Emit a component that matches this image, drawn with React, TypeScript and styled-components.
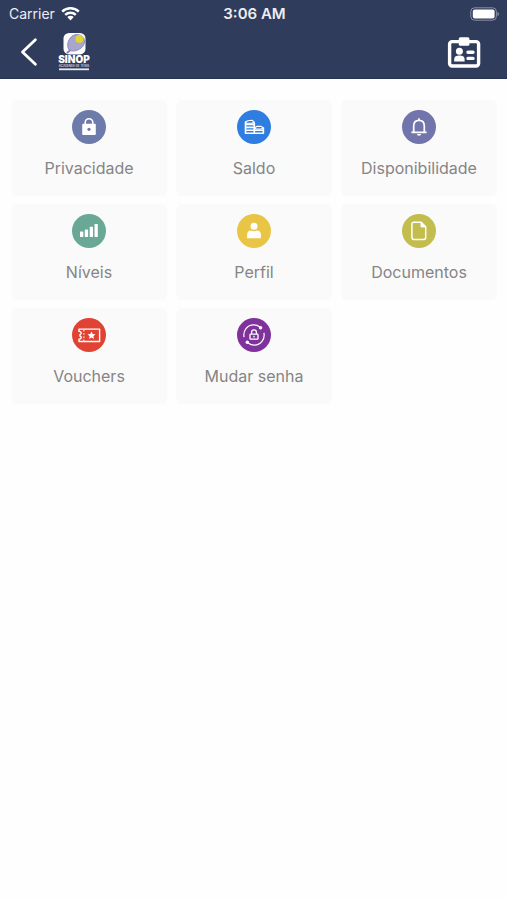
import React from 'react';
import styled, { createGlobalStyle } from 'styled-components';

const GlobalStyle = createGlobalStyle`
  *, *::before, *::after { box-sizing: border-box; }
  body {
    margin: 0;
    background: #fefefe;
    font-family: Inter, "Open Sans", sans-serif;
  }
`;

const Header = styled.header`
  background: #303c5b;
  border-bottom: 1px solid #28324d;
  color: #fff;
`;

const StatusBar = styled.div`
  display: grid;
  grid-template-columns: 1fr auto 1fr;
  align-items: center;
  height: 28px;
  padding: 0 7px 0 9px;
  font-size: 14px;
  line-height: 20px;
  color: #eceef3;
`;

const Carrier = styled.span`
  display: flex;
  align-items: center;
  gap: 6px;
`;

const Clock = styled.time`
  font-size: 15px;
  font-weight: 600;
`;

const BatteryIcon = styled.svg`
  justify-self: end;
`;

const NavBar = styled.nav`
  display: flex;
  align-items: center;
  height: 50px;
  padding: 0 25px 2px 18px;
`;

const IconButton = styled.button`
  display: flex;
  padding: 0;
  border: 0;
  background: none;
  color: inherit;
  cursor: pointer;
`;

const BadgeButton = styled(IconButton)`
  margin-left: auto;
`;

const Logo = styled.svg`
  margin-left: 18px;
`;

const Menu = styled.main`
  display: grid;
  grid-template-columns: repeat(3, 1fr);
  gap: 8px 9px;
  padding: 21px 10px 24px 11px;
`;

const Card = styled.button`
  display: flex;
  flex-direction: column;
  align-items: center;
  gap: 12px;
  height: 96px;
  padding: 10px 0 0;
  border: 0;
  border-radius: 6px;
  background: #fafafa;
  color: #858585;
  font-family: inherit;
  font-size: 16px;
  font-weight: 400;
  line-height: 24px;
  cursor: pointer;
`;

const Disc = styled.span<{ $color: string }>`
  display: flex;
  width: 34px;
  height: 34px;
  border-radius: 50%;
  background: ${({ $color }) => $color};
`;

const Glyph = ({ children }: { children: React.ReactNode }) => (
  <svg width="34" height="34" viewBox="0 0 34 34" fill="none" stroke="#fff" strokeWidth="1.4" strokeLinejoin="round" aria-hidden="true">
    {children}
  </svg>
);

const items = [
  {
    label: 'Privacidade',
    color: '#6c7ba9',
    icon: (
      <>
        <path d="M13.2 15.5V12.5a3.8 3.8 0 0 1 7.6 0v3" strokeWidth="1.6" />
        <rect x="10.2" y="13.8" width="13.6" height="11.2" rx="1" fill="#fff" stroke="none" />
        <circle cx="17" cy="19.3" r="1.6" fill="#6c7ba9" stroke="none" />
      </>
    ),
  },
  {
    label: 'Saldo',
    color: '#2f7de1',
    icon: (
      <>
        <path d="M8.5 11.4V23.2H26.4V17.6M8.5 14.4h9M8.5 17.4h9M8.5 20.3h18M17.3 12.4v10.8" strokeWidth="1.6" />
        <path d="M8.7 12l2-1.3 4.3-.4 2.4 1.8-2.8 1.2H8.7z" strokeWidth="1.1" />
        <path d="M17.5 17.8l2.4-1.4h4.2l2.2 1.4-2 1.2h-5.4z" strokeWidth="1.1" />
      </>
    ),
  },
  {
    label: 'Disponibilidade',
    color: '#7274ac',
    icon: (
      <>
        <path d="M9.4 22.4h15.2M11.7 22v-6.1c0-3.4 2.1-5.6 5.3-5.6s5.3 2.2 5.3 5.6V22M17 10.3V8.2" strokeWidth="1.7" />
        <path d="M15 24h4a2 1.8 0 0 1-4 0z" fill="#fff" stroke="none" />
      </>
    ),
  },
  {
    label: 'Níveis',
    color: '#69a894',
    icon: (
      <g fill="#fff" stroke="none">
        <rect x="8" y="17.6" width="3.3" height="5.4" rx=".6" />
        <rect x="12.8" y="15.4" width="3.3" height="7.6" rx=".6" />
        <rect x="17.7" y="12.7" width="3.3" height="10.3" rx=".6" />
        <rect x="22.5" y="10" width="3.3" height="13" rx=".6" />
      </g>
    ),
  },
  {
    label: 'Perfil',
    color: '#e9c546',
    icon: (
      <g fill="#fff" stroke="none">
        <circle cx="17" cy="12.3" r="3.5" />
        <path d="M10.1 24.3v-3.6c0-2.6 1.7-4.2 4.1-4.2 1.8.9 3.8.9 5.6 0 2.4 0 4.1 1.6 4.1 4.2v3.6z" />
      </g>
    ),
  },
  {
    label: 'Documentos',
    color: '#c2bd4c',
    icon: (
      <>
        <path d="M11.8 8.2h7.4l4.5 4.6v10.8a1.9 1.9 0 0 1-1.9 1.9h-10a1.9 1.9 0 0 1-1.9-1.9V10.1a1.9 1.9 0 0 1 1.9-1.9z" strokeWidth="1.5" />
        <path d="M19 8.2v4.7h4.7z" fill="#fff" strokeWidth="1" />
      </>
    ),
  },
  {
    label: 'Vouchers',
    color: '#e04333',
    icon: (
      <>
        <path d="M7 11.1h20.6v12.4H7v-2.3c2.7-.3 3-2.3 1-3.2v-1.4c2-.9 1.7-2.9-1-3.2z" />
        <path d="M11.9 11.5v1.9M11.9 15.1v1.7M11.9 18.4v1.7M11.9 21.6v1.7" strokeWidth="1" />
        <path d="M19.5 13.4l1.2 2.5 2.7.4-2 1.9.5 2.7-2.4-1.3-2.4 1.3.5-2.7-2-1.9 2.7-.4z" fill="#fff" stroke="none" />
      </>
    ),
  },
  {
    label: 'Mudar senha',
    color: '#7f319c',
    icon: (
      <>
        <path d="M7.1 19.2C5.7 12.6 10.3 6.9 16.7 6.9c2.3 0 4.4.7 6.1 2.1M26.9 14.8c1.4 6.6-3.2 12.3-9.6 12.3-2.3 0-4.4-.7-6.1-2.1" strokeWidth="1.2" />
        <circle cx="23.6" cy="9.8" r="1.7" fill="#fff" stroke="none" />
        <circle cx="10.3" cy="24.3" r="1.7" fill="#fff" stroke="none" />
        <rect x="13" y="16.2" width="8" height="5" rx=".6" strokeWidth="1.3" />
        <path d="M14.6 16v-1.8a2.4 2.4 0 0 1 4.8 0V16M17 17.8v1.6" strokeWidth="1.3" />
      </>
    ),
  },
];

export default function App() {
  return (
    <>
      <GlobalStyle />
      <Header>
        <StatusBar>
          <Carrier>
            Carrier
            <svg width="19" height="14" viewBox="0 0 19 14" fill="none" stroke="#fff" strokeWidth="2.5" aria-hidden="true">
              <path d="M1.2 4.6a12 12 0 0 1 16.6 0M4.2 7.9a7.7 7.7 0 0 1 10.6 0" />
              <path d="M6.3 10.1a4.6 4.6 0 0 1 6.4 0L9.5 13.4z" fill="#fff" stroke="none" />
            </svg>
          </Carrier>
          <Clock>3:06 AM</Clock>
          <BatteryIcon width="30" height="14" viewBox="0 0 30 14" role="img" aria-label="Bateria">
            <rect x=".8" y=".8" width="25.6" height="12.4" rx="3.8" fill="none" stroke="#8a91a5" />
            <rect x="2.8" y="2.4" width="21.8" height="9.2" rx="2" fill="#fff" />
            <path d="M27.5 4.8c2 .8 2 3.6 0 4.4z" fill="#8a91a5" />
          </BatteryIcon>
        </StatusBar>
        <NavBar>
          <IconButton type="button" aria-label="Voltar">
            <svg width="22" height="30" viewBox="0 0 22 30" fill="none" stroke="#fff" strokeWidth="2.8" strokeLinecap="round" strokeLinejoin="round">
              <path d="M17.4 2.8L4.5 15l12.9 12.2" />
            </svg>
          </IconButton>
          <Logo width="32" height="40" viewBox="0 0 32 40" role="img" aria-label="Sinop">
            <rect x="5.5" y="1" width="22" height="21.4" rx="5.5" fill="#fbfbff" />
            <path d="M11.5 18.2C8.4 15 9.5 8.2 13.6 4.6c3.4-2.9 8.8-2.6 11.6.8 2.1 2.6 1.6 6.8-.8 9.4-3.3 3.5-8.7 5.3-12.9 3.4z" fill="#a9a5cd" stroke="#8d8bb8" />
            <path d="M12.6 18l-3.8 3" stroke="#8986b5" strokeWidth="2" />
            <circle cx="21.4" cy="6.9" r="3.9" fill="#dfd635" />
            <text x="16" y="31.4" textAnchor="middle" fontFamily="Inter, sans-serif" fontSize="10" fontWeight="900" fill="#fff">SINOP</text>
            <text x="16" y="35.2" textAnchor="middle" fontFamily="Inter, sans-serif" fontSize="3" fontWeight="600" fill="#d5d8e3">ACADEMIA DE TÊNIS</text>
            <rect x="1" y="36.4" width="30" height="1.8" fill="#e7e9f0" />
          </Logo>
          <BadgeButton type="button" aria-label="Cartão de identificação">
            <svg width="36" height="34" viewBox="0 0 36 34" fill="none" stroke="#fff">
              <rect x="3.6" y="6.6" width="29" height="24.4" rx="2.5" strokeWidth="3.4" />
              <rect x="12.8" y="2.2" width="10.6" height="8.6" rx="1.5" fill="#fff" stroke="none" />
              <circle cx="13.4" cy="16.2" r="3.5" fill="#fff" stroke="none" />
              <path d="M8.2 26.4v-2.4c0-2.5 2.4-3.5 5.2-3.5s5.2 1 5.2 3.5v2.4z" fill="#fff" stroke="none" />
              <path d="M22 17.2h5M22 23.4h5" strokeWidth="3.4" strokeLinecap="round" />
            </svg>
          </BadgeButton>
        </NavBar>
      </Header>
      <Menu>
        {items.map(({ label, color, icon }) => (
          <Card key={label} type="button">
            <Disc $color={color}>
              <Glyph>{icon}</Glyph>
            </Disc>
            {label}
          </Card>
        ))}
      </Menu>
    </>
  );
}
